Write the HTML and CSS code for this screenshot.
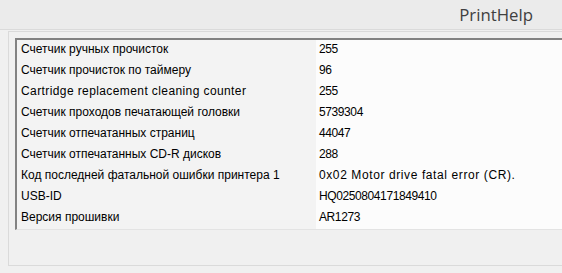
FILE: index.html
```html
<!DOCTYPE html>
<html lang="ru">
<head>
    <meta charset="UTF-8">
    <title>PrintHelp</title>
    <link rel="stylesheet" href="styles.css">
</head>
<body>
    <div class="window">
        <div class="topbar">
            <span class="brand">PrintHelp</span>
        </div>
        <div class="panel">
            <div class="listbox">
                <div class="row"><div class="key">Счетчик ручных прочисток</div><div class="val num">255</div></div>
                <div class="row"><div class="key">Счетчик прочисток по таймеру</div><div class="val num">96</div></div>
                <div class="row"><div class="key lat">Cartridge replacement cleaning counter</div><div class="val num">255</div></div>
                <div class="row"><div class="key">Счетчик проходов печатающей головки</div><div class="val num">5739304</div></div>
                <div class="row"><div class="key">Счетчик отпечатанных страниц</div><div class="val num">44047</div></div>
                <div class="row"><div class="key">Счетчик отпечатанных CD-R дисков</div><div class="val num">288</div></div>
                <div class="row"><div class="key">Код последней фатальной ошибки принтера 1</div><div class="val lat wide">0x02 Motor drive fatal error (CR).</div></div>
                <div class="row"><div class="key">USB-ID</div><div class="val num">HQ0250804171849410</div></div>
                <div class="row"><div class="key">Версия прошивки</div><div class="val num">AR1273</div></div>
            </div>
            <div class="footer"></div>
        </div>
    </div>
</body>
</html>
```

FILE: styles.css
```css
* { margin: 0; padding: 0; box-sizing: border-box; }
body { background: #f0f0f0; font-family: "Liberation Sans", Arial, sans-serif; font-size: 12px; color: #000; overflow: hidden; }
.window { width: 562px; height: 273px; display: flex; flex-direction: column; }

/* верхняя полоса с названием */
.topbar { height: 30px; background: #ebebeb; border-bottom: 1px solid #dadada; display: flex; justify-content: flex-end; align-items: center; padding-right: 29px; }
.brand { font-family: "Open Sans", sans-serif; font-size: 16.8px; color: #404040; }

.panel { flex: 1; margin: 1px 0 7px 8px; border-left: 1px solid #dadada; border-top: 1px solid #dadada; border-bottom: 1px solid #dadada; padding: 6px 0 0 6px; display: flex; flex-direction: column; background: #f0f0f0; }
.listbox { border-left: 2px solid #828282; border-top: 2px solid #828282; border-bottom: 1px solid #e3e3e3; background: #fbfbfb; }
.row { display: flex; height: 21px; align-items: center; }
.key { width: 299px; padding-left: 4px; padding-bottom: 4px; background: #f3f3f3; height: 100%; display: flex; align-items: center; }
.val { flex: 1; padding-left: 3px; padding-bottom: 4px; height: 100%; display: flex; align-items: center; background: #fcfcfc; }
.lat { letter-spacing: 0.4px; }
.lat.wide { letter-spacing: 0.6px; }
.num { letter-spacing: -0.4px; }
.footer { flex: 1; }
```
